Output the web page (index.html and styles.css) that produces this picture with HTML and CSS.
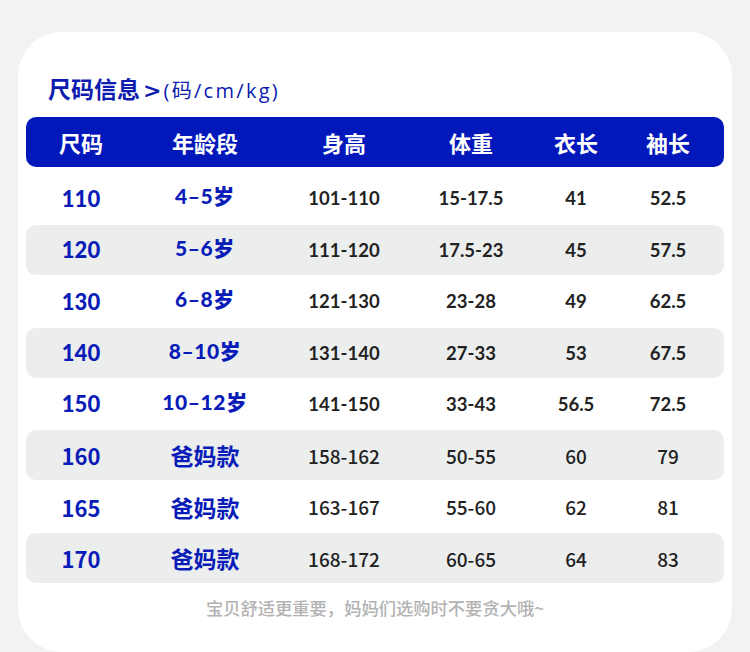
FILE: index.html
```html
<!DOCTYPE html>
<html lang="zh-CN">
<head>
<meta charset="utf-8">
<link rel="stylesheet" href="styles.css">
</head>
<body>
<div class="card">
  <h1 class="title">尺码信息<span class="arrow">&gt;</span><span class="unit">(码/cm/kg)</span></h1>
  <div class="table">
    <div class="row head">
      <div>尺码</div><div>年龄段</div><div>身高</div><div>体重</div><div>衣长</div><div>袖长</div>
    </div>
    <div class="row"><div class="size">110</div><div class="age">4–5岁</div><div>101-110</div><div>15-17.5</div><div>41</div><div>52.5</div></div>
    <div class="row gray"><div class="size">120</div><div class="age">5–6岁</div><div>111-120</div><div>17.5-23</div><div>45</div><div>57.5</div></div>
    <div class="row"><div class="size">130</div><div class="age">6–8岁</div><div>121-130</div><div>23-28</div><div>49</div><div>62.5</div></div>
    <div class="row gray"><div class="size">140</div><div class="age">8–10岁</div><div>131-140</div><div>27-33</div><div>53</div><div>67.5</div></div>
    <div class="row"><div class="size">150</div><div class="age">10–12岁</div><div>141-150</div><div>33-43</div><div>56.5</div><div>72.5</div></div>
    <div class="row gray alt"><div class="size">160</div><div class="age">爸妈款</div><div>158-162</div><div>50-55</div><div>60</div><div>79</div></div>
    <div class="row alt"><div class="size">165</div><div class="age">爸妈款</div><div>163-167</div><div>55-60</div><div>62</div><div>81</div></div>
    <div class="row gray alt"><div class="size">170</div><div class="age">爸妈款</div><div>168-172</div><div>60-65</div><div>64</div><div>83</div></div>
  </div>
  <p class="note">宝贝舒适更重要，妈妈们选购时不要贪大哦~</p>
</div>
</body>
</html>
```
FILE: styles.css
```css
html, body {
  margin: 0;
  padding: 0;
  background: #f2f2f2;
}
body {
  width: 750px;
  height: 652px;
  overflow: hidden;
  font-family: "Noto Sans CJK SC", sans-serif;
}
.card {
  margin: 32px 0 0 18px;
  width: 714px;
  height: 620px;
  background: #fff;
  border-radius: 44px;
  box-sizing: border-box;
  padding: 40px 8px 0 8px;
}
.title {
  margin: 0 0 0 22px;
  height: 32px;
  line-height: 32px;
  font-size: 23px;
  font-weight: 700;
  color: #0c1bb0;
  white-space: nowrap;
}
.arrow {
  font-family: "DejaVu Sans", sans-serif;
  font-weight: 700;
  font-size: 22px;
  margin-left: 3px;
}
.unit {
  font-family: "Open Sans", "Noto Sans CJK SC", sans-serif;
  font-weight: 400;
  font-size: 20px;
  letter-spacing: 2.3px;
  margin-left: 2px;
}
.table {
  margin-top: 13px;
  display: flex;
  flex-direction: column;
  gap: 1.4px;
}
.row {
  display: grid;
  grid-template-columns: 110px 138px 140px 114px 96px 88px;
  height: 50px;
  align-items: center;
  border-radius: 10px;
  font-family: "Lato", "Noto Sans CJK SC", sans-serif;
  font-size: 18.5px;
  font-weight: 700;
  color: #222;
}
.row > div {
  text-align: center;
}
.row.head {
  background: #0318bb;
  color: #fff;
  font-family: "Noto Sans CJK SC", sans-serif;
  font-size: 22px;
  font-weight: 700;
  margin-bottom: 5px;
}
.row.gray {
  background: #eceeee;
}
.row .size {
  color: #0a1cb8;
  font-size: 22px;
  font-weight: 900;
}
.row .age {
  color: #0a1cb8;
  font-size: 21px;
  font-weight: 900;
  letter-spacing: 0.6px;
  margin-top: -6px;
}
.row.alt {
  font-family: "Noto Sans CJK SC", sans-serif;
  font-weight: 500;
  font-size: 19px;
}
.row.alt .size {
  font-weight: 700;
  font-size: 22px;
}
.row.alt .age {
  font-weight: 700;
  font-size: 23px;
  letter-spacing: 0;
  margin-top: 0;
}
.note {
  margin: 12px 0 0 0;
  text-align: center;
  font-size: 17.3px;
  font-weight: 500;
  color: #b3b3b3;
}
```
